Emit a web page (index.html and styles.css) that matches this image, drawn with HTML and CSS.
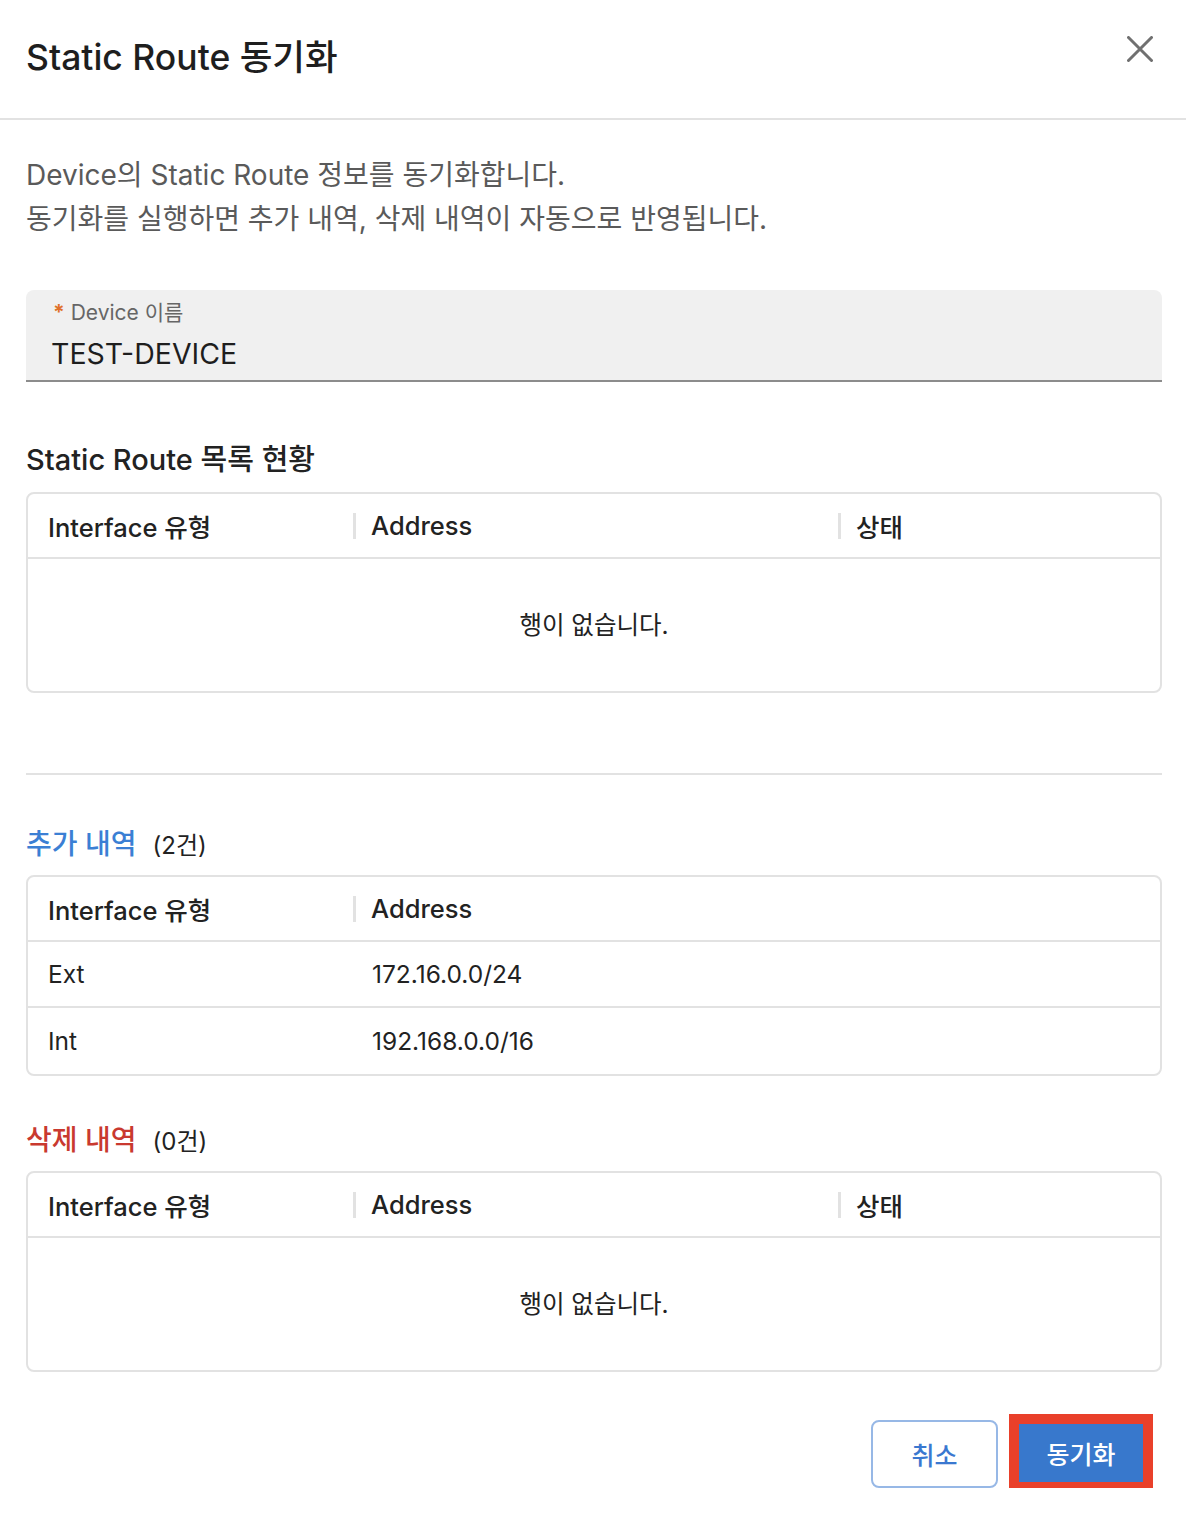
FILE: index.html
```html
<!DOCTYPE html>
<html lang="ko">
<head>
<meta charset="utf-8">
<title>Static Route 동기화</title>
<link rel="stylesheet" href="styles.css">
</head>
<body>
<div class="dialog">
  <div class="header">
    <h1 class="title">Static Route 동기화</h1>
    <button class="close" aria-label="close">
      <svg width="26" height="26" viewBox="0 0 26 26"><path d="M1.5 1.5 L24.5 24.5 M24.5 1.5 L1.5 24.5" stroke="#707070" stroke-width="3" stroke-linecap="round" fill="none"/></svg>
    </button>
  </div>
  <div class="content">
    <p class="desc">Device의 Static Route 정보를 동기화합니다.<br>동기화를 실행하면 추가 내역, 삭제 내역이 자동으로 반영됩니다.</p>

    <div class="field">
      <div class="label"><span class="req">*</span> Device 이름</div>
      <div class="value">TEST-DEVICE</div>
    </div>

    <h2 class="section">Static Route 목록 현황</h2>
    <div class="grid">
      <div class="row head three">
        <div class="cell">Interface 유형</div>
        <div class="cell sep">Address</div>
        <div class="cell sep">상태</div>
      </div>
      <div class="empty">행이 없습니다.</div>
    </div>

    <hr class="divider">

    <h2 class="section"><span class="add">추가 내역</span><span class="count">(2건)</span></h2>
    <div class="grid">
      <div class="row head two">
        <div class="cell">Interface 유형</div>
        <div class="cell sep">Address</div>
      </div>
      <div class="row body two">
        <div class="cell">Ext</div>
        <div class="cell">172.16.0.0/24</div>
      </div>
      <div class="row body two last">
        <div class="cell">Int</div>
        <div class="cell">192.168.0.0/16</div>
      </div>
    </div>

    <h2 class="section del-title"><span class="del">삭제 내역</span><span class="count">(0건)</span></h2>
    <div class="grid">
      <div class="row head three">
        <div class="cell">Interface 유형</div>
        <div class="cell sep">Address</div>
        <div class="cell sep">상태</div>
      </div>
      <div class="empty">행이 없습니다.</div>
    </div>
  </div>
  <div class="footer">
    <button class="btn cancel">취소</button>
    <button class="btn primary">동기화</button>
  </div>
</div>
</body>
</html>
```

FILE: styles.css
```css
* { box-sizing: border-box; }
html, body { margin: 0; padding: 0; background: #fff; }
body {
  font-family: "Inter", "Noto Sans CJK KR", sans-serif;
  color: #222;
}
.dialog { width: 1186px; }
.header {
  height: 120px;
  padding: 0 33px 0 26px;
  display: flex;
  align-items: center;
  justify-content: space-between;
  border-bottom: 2px solid #e2e2e2;
}
.title {
  margin: 0;
  font-size: 35.5px;
  font-weight: 500;
  color: #1e1e1e;
  letter-spacing: 0;
  position: relative;
  top: -5px;
}
.close {
  border: none;
  background: none;
  padding: 0;
  width: 26px;
  height: 26px;
  display: flex;
  position: relative;
  top: -10px;
}
.content { padding: 33px 24px 0 26px; }
.desc {
  margin: 0;
  font-size: 28px;
  line-height: 44px;
  color: #5a5a5a;
  letter-spacing: 0;
}
.field {
  margin-top: 49px;
  height: 92px;
  background: #f0f0f0;
  border-radius: 8px 8px 0 0;
  border-bottom: 2px solid #8c8c8c;
  padding: 10px 24px 0 27px;
}
.label {
  font-size: 21px;
  line-height: 26px;
  color: #666;
}
.req { color: #e0702a; font-weight: 700; }
.value {
  margin-top: 11px;
  margin-left: -2px;
  font-size: 28.5px;
  line-height: 34px;
  color: #1e1e1e;
}
.section {
  margin: 58px 0 12px;
  font-size: 29px;
  line-height: 40px;
  font-weight: 500;
  color: #222;
  display: flex;
  align-items: baseline;
}
.add, .del { font-size: 28px; }
.add { color: #3b7fd4; }
.del { color: #c9392f; }
.count { font-size: 24px; font-weight: 400; color: #222; margin-left: 16px; }
.del-title { margin-top: 44px; margin-bottom: 9px; }
.divider {
  margin: 80px 0 0;
  border: none;
  border-top: 2px solid #e2e2e2;
}
.divider + .section { margin-top: 49px; margin-bottom: 9px; }
.grid {
  border: 2px solid #e2e2e2;
  border-radius: 8px;
  overflow: hidden;
}
.row {
  display: grid;
  align-items: center;
  height: 66px;
  border-bottom: 2px solid #e2e2e2;
}
.row.last { border-bottom: none; height: 66px; }
.row.three { grid-template-columns: 325px 485px 1fr; }
.row.two { grid-template-columns: 325px 1fr; }
.cell {
  padding-left: 20px;
  font-size: 24.5px;
  color: #222;
  white-space: nowrap;
  position: relative;
}
.head .cell { font-weight: 500; font-size: 25.5px; }
.cell.sep { padding-left: 18px; }
.body .cell + .cell { padding-left: 19px; }
.cell.sep::before {
  content: "";
  position: absolute;
  left: 0;
  top: 50%;
  width: 3px;
  height: 26px;
  margin-top: -13px;
  background: #e2e2e2;
}
.head { height: 65px; }
.empty {
  height: 132px;
  display: flex;
  align-items: center;
  justify-content: center;
  font-size: 24.5px;
  color: #222;
  padding-bottom: 3px;
}
.footer {
  display: flex;
  justify-content: flex-end;
  gap: 21px;
  padding: 48px 43px 0 0;
}
.btn {
  font-family: "Inter", "Noto Sans CJK KR", sans-serif;
  font-size: 25px;
  font-weight: 500;
  cursor: pointer;
}
.cancel {
  width: 127px;
  height: 68px;
  border: 2px solid #97b8e6;
  border-radius: 8px;
  background: #fff;
  color: #3a78d0;
}
.primary {
  width: 124px;
  height: 58px;
  margin-top: 4px;
  border: none;
  background: #3878cc;
  color: #fff;
  outline: 10px solid #e9402a;
  box-shadow: 0 14px 10px -6px rgba(0,0,0,0.15);
}
```
